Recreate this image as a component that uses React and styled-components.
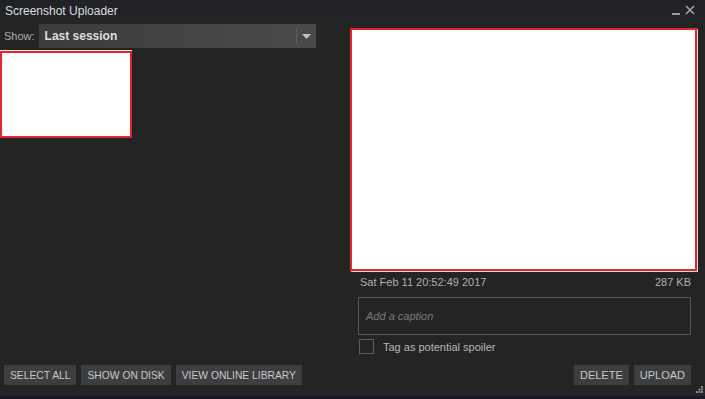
import React from "react";
import styled, { createGlobalStyle } from "styled-components";

const Global = createGlobalStyle`
  html, body { margin: 0; padding: 0; background: #242424; }
  body { font-family: "Liberation Sans", Arial, sans-serif; }
  * { box-sizing: border-box; }
`;

const Window = styled.div`
  width: 705px;
  height: 399px;
  display: flex;
  flex-direction: column;
  background: #242424;
  position: relative;
  overflow: hidden;
`;

const TitleBar = styled.div`
  height: 22px;
  display: flex;
  align-items: center;
  justify-content: space-between;
  padding: 0 10px 0 5px;
  background: linear-gradient(#1f2125, #232427);
`;

const Title = styled.div`
  color: #dcdedf;
  font-size: 12px;
  margin-top: -1px;
`;

const Controls = styled.div`
  display: flex;
  align-items: center;
  gap: 5px;
  margin-top: -2px;
`;

const Main = styled.div`
  flex: 1;
  display: flex;
  min-height: 0;
`;

const LeftCol = styled.div`
  width: 316px;
  display: flex;
  flex-direction: column;
  padding-bottom: 10px;
`;

const ShowRow = styled.div`
  display: flex;
  align-items: center;
  height: 24px;
  margin-top: 2px;
  padding-left: 4px;
  gap: 4px;
`;

const ShowLabel = styled.span`
  color: #b0b0b0;
  font-size: 11px;
`;

const Dropdown = styled.div`
  flex: 1;
  height: 24px;
  display: flex;
  align-items: center;
  background: linear-gradient(90deg, #3c3c3d, #4a4a4b);
  color: #dcdedf;
  font-size: 12px;
  font-weight: bold;
`;

const DropText = styled.span`
  flex: 1;
  padding-left: 6px;
`;

const DropDivider = styled.div`
  width: 1px;
  height: 16px;
  background: #5e5e5e;
`;

const DropArrow = styled.div`
  width: 19px;
  display: flex;
  justify-content: center;
`;

const Thumbs = styled.div`
  flex: 1;
  margin-top: 3px;
`;

const Thumb = styled.div`
  width: 132px;
  height: 87px;
  background: #fff;
  border: 2px solid #e2262b;
  box-shadow: 0 -1px 0 #e9e9e9;
`;

const ButtonRow = styled.div`
  display: flex;
  gap: 5px;
  padding-left: ${p => p.$left || 0}px;
  justify-content: ${p => p.$end ? "flex-end" : "flex-start"};
`;

const Button = styled.button`
  flex: none;
  white-space: nowrap;
  height: 20px;
  padding: 0 6px;
  border: none;
  background: #3d3e40;
  color: #c8c8c8;
  font-family: "Liberation Sans", Arial, sans-serif;
  font-size: ${p => p.$size || 11}px;
  text-transform: uppercase;
  cursor: pointer;
`;

const RightCol = styled.div`
  width: 347px;
  margin-left: 34px;
  display: flex;
  flex-direction: column;
  padding-top: 6px;
  padding-bottom: 10px;
`;

const Preview = styled.div`
  height: 243px;
  background: #fff;
  border: 2px solid #e2262b;
  box-shadow: 1px 1px 0 #d8d8d8;
`;

const Details = styled.div`
  padding: 0 6px 0 8px;
  display: flex;
  flex-direction: column;
  flex: 1;
`;

const MetaRow = styled.div`
  display: flex;
  justify-content: space-between;
  color: #b0b0b0;
  font-size: 11px;
  margin-top: 4px;
  padding: 0 0 0 2px;
  height: 14px;
  line-height: 14px;
`;

const Caption = styled.div`
  margin-top: 8px;
  height: 38px;
  border: 1px solid #595959;
  display: flex;
  align-items: center;
  padding-left: 7px;
  color: #7b7b7b;
  font-style: italic;
  font-size: 11px;
`;

const CheckRow = styled.div`
  display: flex;
  align-items: center;
  gap: 9px;
  margin-top: 4px;
  color: #b8b8b8;
  font-size: 11px;
  padding-left: 1px;
`;

const Check = styled.div`
  width: 15px;
  height: 15px;
  border: 1px solid #5c5c5c;
`;

const Spacer = styled.div`
  flex: 1;
`;

const BottomStrip = styled.div`
  height: 4px;
  background: #161a1f;
  border-top: 1px solid #1d2a36;
`;

const Grip = styled.svg`
  position: absolute;
  right: 2px;
  bottom: 6px;
`;

export default function App() {
  return (
    <>
      <Global />
      <Window>
        <TitleBar>
          <Title>Screenshot Uploader</Title>
          <Controls>
            <svg width="8" height="10" viewBox="0 0 8 10">
              <rect x="0" y="8" width="8" height="2" fill="#9a9a9a" />
            </svg>
            <svg width="10" height="10" viewBox="0 0 10 10">
              <path d="M1 1 L9 9 M9 1 L1 9" stroke="#a5a5a5" strokeWidth="1.6" />
            </svg>
          </Controls>
        </TitleBar>
        <Main>
          <LeftCol>
            <ShowRow>
              <ShowLabel>Show:</ShowLabel>
              <Dropdown>
                <DropText>Last session</DropText>
                <DropDivider />
                <DropArrow>
                  <svg width="9" height="5" viewBox="0 0 9 5">
                    <path d="M0 0 H9 L4.5 5 Z" fill="#c0c0c0" />
                  </svg>
                </DropArrow>
              </Dropdown>
            </ShowRow>
            <Thumbs>
              <Thumb />
            </Thumbs>
            <ButtonRow $left={4}>
              <Button $size={10.3}>Select All</Button>
              <Button $size={10.3}>Show on Disk</Button>
              <Button $size={10.3}>View Online Library</Button>
            </ButtonRow>
          </LeftCol>
          <RightCol>
            <Preview />
            <Details>
              <MetaRow>
                <span>Sat Feb 11 20:52:49 2017</span>
                <span>287 KB</span>
              </MetaRow>
              <Caption>Add a caption</Caption>
              <CheckRow>
                <Check />
                <span>Tag as potential spoiler</span>
              </CheckRow>
              <Spacer />
              <ButtonRow $end>
                <Button>Delete</Button>
                <Button>Upload</Button>
              </ButtonRow>
            </Details>
          </RightCol>
        </Main>
        <BottomStrip />
        <Grip width="7" height="7" viewBox="0 0 7 7">
          <rect x="5" y="0" width="2" height="2" fill="#8a8a8a" />
          <rect x="2.5" y="2.5" width="2" height="2" fill="#8a8a8a" />
          <rect x="5" y="2.5" width="2" height="2" fill="#8a8a8a" />
          <rect x="0" y="5" width="2" height="2" fill="#8a8a8a" />
          <rect x="2.5" y="5" width="2" height="2" fill="#8a8a8a" />
          <rect x="5" y="5" width="2" height="2" fill="#8a8a8a" />
        </Grip>
      </Window>
    </>
  );
}
